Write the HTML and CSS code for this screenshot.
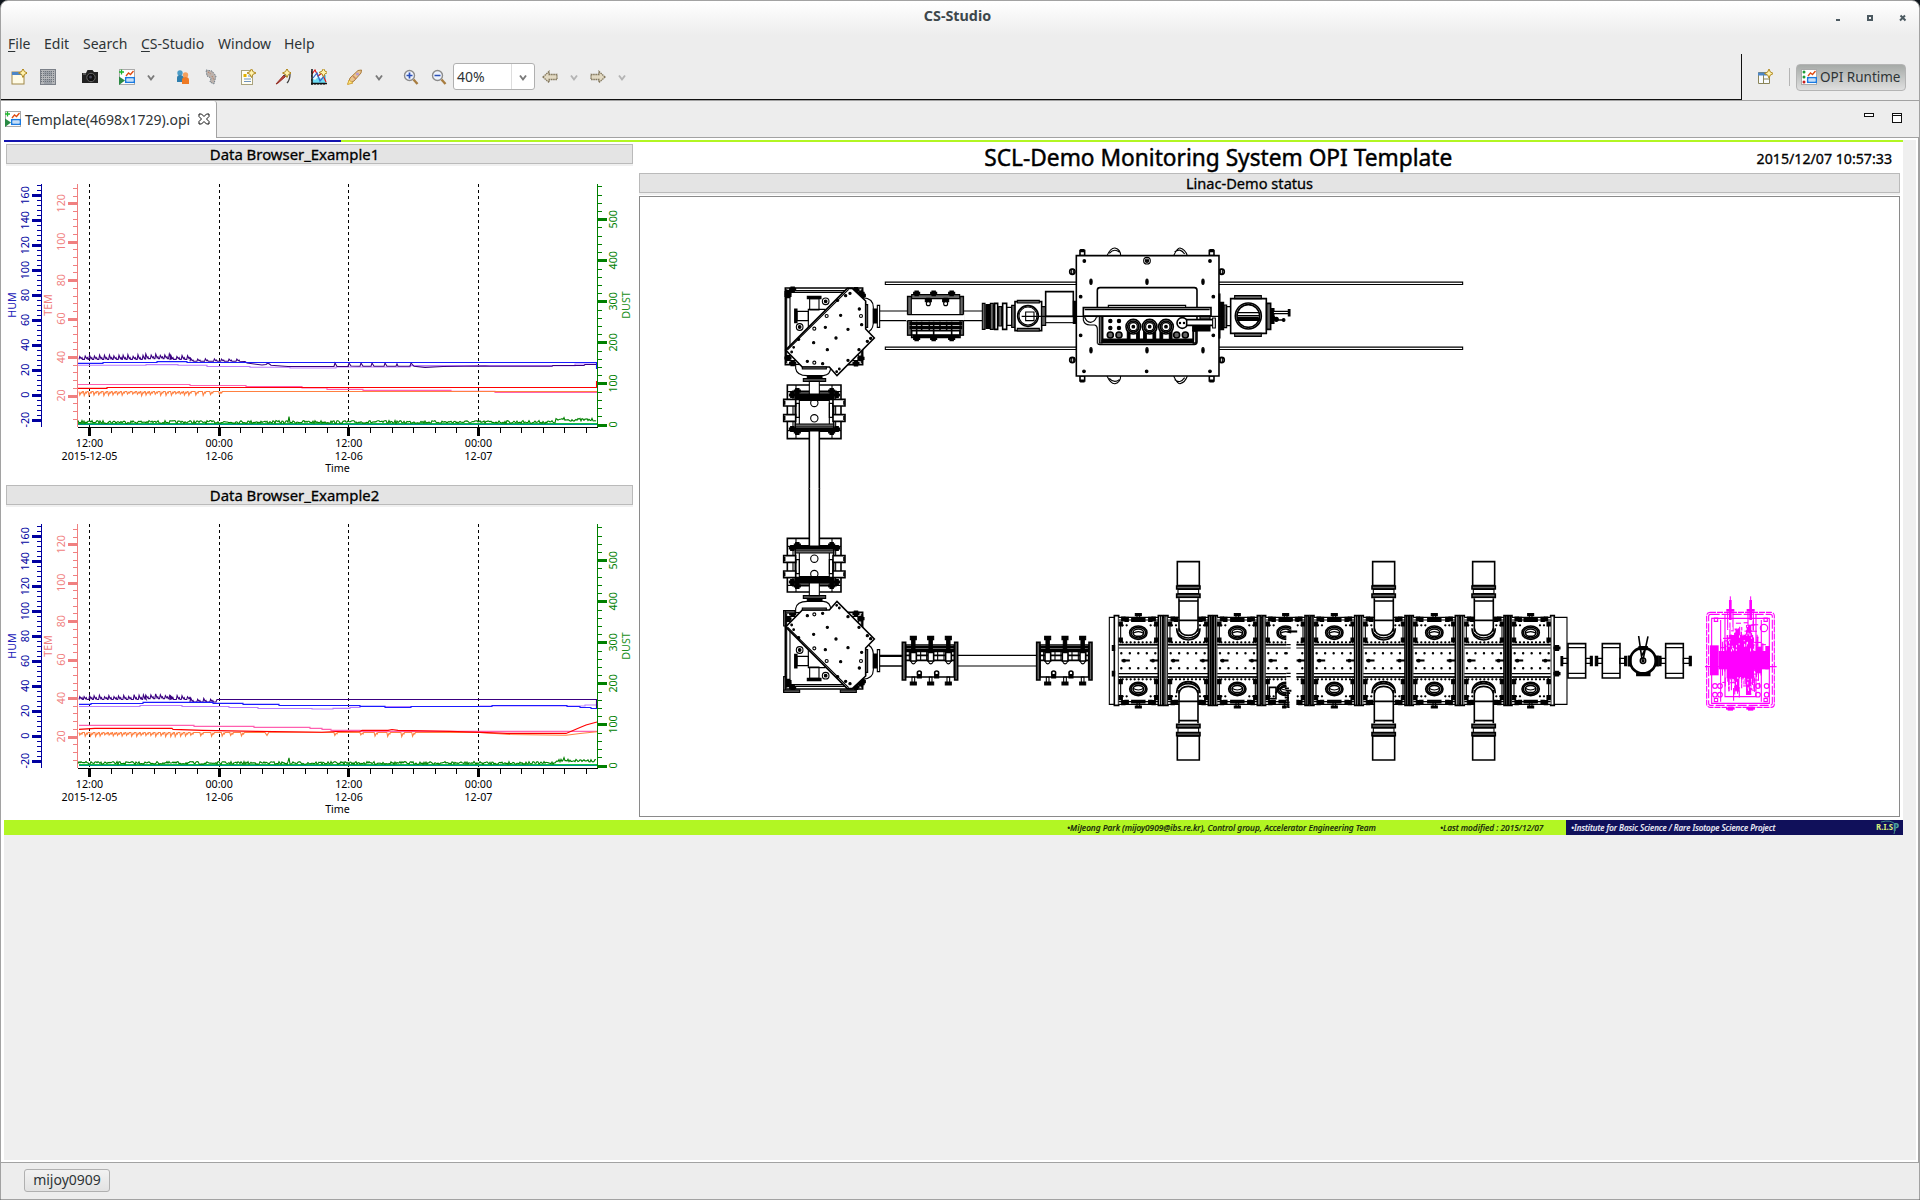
FILE: index.html
```
<!DOCTYPE html>
<html lang="en">
<head>
<meta charset="utf-8">
<title>CS-Studio</title>
<link rel="stylesheet" href="styles.css">
</head>
<body>
<svg class="defs" aria-hidden="true">
  <defs>
    <g id="star"><path d="M0-4.5 1.4-1.4 4.5 0 1.4 1.4 0 4.5-1.4 1.4-4.5 0-1.4-1.4Z" fill="#fff3b0" stroke="#b08820"/></g>
    <g id="opi">
      <rect x=".5" y=".5" width="15" height="15" fill="#fff" stroke="#aaa"/>
      <path d="M7 7 9.5 4l2 1.5L14.5 2" fill="none" stroke="#e04a10" stroke-width="1.3"/>
      <rect x="6.7" y="8.7" width="8.6" height="4.6" fill="#fff" stroke="#1a7ae0" stroke-width="1.5"/>
      <path d="M8.5 11h5" stroke="#1a7ae0" stroke-dasharray="1 1"/>
    </g>
    <g id="chev"><path d="M1 3.5 4 7.5 7 3.5" fill="none" stroke="currentColor" stroke-width="1.9"/></g>
    <g id="arrow"><path d="M1 8 7 2.5V5.5H15V10.5H7V13.5Z" fill="#e2d9c2" stroke="#857a60" stroke-width="1.3" stroke-dasharray="1.6 .6"/></g>
    <g id="lens"><circle cx="6.5" cy="6.5" r="5" fill="#eef3fc" stroke="#8c8c8c" stroke-width="1.4"/><path d="M10.5 10.5 14.5 15" stroke="#a87d40" stroke-width="2.4"/></g>
  </defs>
</svg>
<div class="window">
  <header class="titlebar">
    <span class="title">CS-Studio</span>
    <svg class="winbtns" width="70" height="12" fill="none" stroke="#4c5a61" stroke-width="2"><path d="M1 8h4"/><rect x="33" y="4" width="4" height="4"/><path d="M65.500 3.500l5 5M70 3.500l-5 5"/></svg>
  </header>
  <nav class="menu">
    <span class="m1"><u>F</u>ile</span><span class="m2">Edit</span><span class="m3">Se<u>a</u>rch</span><span class="m4"><u>C</u>S-Studio</span><span class="m5">Window</span><span class="m6">Help</span>
  </nav>
  <div class="toolbar">
    <div class="tools">
      <svg class="ic" viewBox="0 0 16 16"><rect x="1" y="3" width="12" height="12" fill="#fffbe6" stroke="#a08848"/><rect x="1" y="3" width="12" height="3" fill="#4d86c6"/><use href="#star" x="12" y="4"/></svg>
      <svg class="ic g13" viewBox="0 0 16 16"><rect x=".5" y=".5" width="15" height="15" fill="#b4b6b9" stroke="#7b8088"/><path d="M4 2h8v5H4zM4 10h8v5H4z" fill="#9a9fa6"/><path d="M1 2.500h14M1 4.500h14M1 6.500h14M1 8.500h14M1 10.500h14M1 12.500h14" stroke="#6d737a" stroke-dasharray="1 1"/></svg>
      <svg class="ic g26" viewBox="0 0 16 16"><path d="M0 4h4l1.500-3h5L12 3h4v11H0Z" fill="#222"/><circle cx="9" cy="8.500" r="4.200" fill="#111" stroke="#666"/><path d="M1 5h3" stroke="#888"/><circle cx="8.500" cy="8" r="1.500" fill="#445"/></svg>
      <svg class="ic g21" viewBox="0 0 16 16"><use href="#opi"/><path d="M0 3h5M2.500.5v5" stroke="#1db52b" stroke-width="1.300"/><path d="M0 7.500 6 11.500 0 16Z" fill="#2a8a44"/></svg>
      <svg class="ch g12" viewBox="0 0 8 12"><use href="#chev" y="1"/></svg>
      <svg class="ic g20" viewBox="0 0 16 16"><circle cx="5" cy="4" r="2.700" fill="#4a9bc6"/><path d="M2 13V9q0-3 3-3t4 3v4Z" fill="#2f7fae"/><circle cx="10.500" cy="6" r="2.700" fill="#f3a05e"/><path d="M7 15v-4q0-3 3.500-3t3.500 3v4Z" fill="#ee7a24"/></svg>
      <svg class="ic g12" viewBox="0 0 16 16"><path d="M3 1 9 2 13 7 11 15 7 13 8 9 4 7Z" fill="#bcb2ac" stroke="#6e7c88" stroke-dasharray="1.500 1"/><path d="M9 7l2 4M5 3l3 2" stroke="#b5765a" stroke-dasharray="1 1"/></svg>
      <svg class="ic g21" viewBox="0 0 16 16"><rect x="1.500" y="1.500" width="11" height="14" fill="#fffef4" stroke="#a9a27c"/><rect x="3.500" y="5" width="3" height="3" fill="#e2b100"/><path d="M8 7h3M4 10h7M4 12.500h7" stroke="#6f93bf"/><use href="#star" x="11.500" y="4"/></svg>
      <svg class="ic g19" viewBox="0 0 16 16"><path d="M1 15 9 6l1.500 1.500-8 7Z" fill="#c9463a" stroke="#8e2a20"/><path d="M9 7l4-4M15 5q0 6-3 9" stroke="#444" fill="none" stroke-width="1.300"/><use href="#star" x="12" y="4"/></svg>
      <svg class="ic g20" viewBox="0 0 16 16"><rect x="1" y="1" width="14" height="13" fill="#e9fbff"/><path d="M1 9l3 2 3-3 4 2 4-4v9H1z" fill="#6edcf4"/><path d="M1 5 4 1l3 6 4-3 4 9" stroke="#e01818" fill="none" stroke-width="1.200"/><path d="M2 9 6 4l3 8 5-6" stroke="#3465c8" fill="none" stroke-width="1.200"/><path d="M1 0v16M0 14.500h16" stroke="#111" stroke-width="1.500"/><path d="M4 14v2M7 14v2M10 14v2M13 14v2M0 3h1M0 7h1M0 11h1" stroke="#111"/><use href="#star" x="12.500" y="3.500"/></svg>
      <svg class="ic g20" viewBox="0 0 16 16"><path d="M1 15 3 9 11 1.500 14.500 1 14 4 7 12Z" fill="#eac48c" stroke="#a97b3c"/><path d="M.5 15.500 2 11l4 3Z" fill="#ffe67a" stroke="#d3a640"/><circle cx="10.500" cy="5" r="1.600" fill="#b79ad0"/><path d="M6 7l3 3" stroke="#c88860" stroke-width="1.500"/></svg>
      <svg class="ch g12" viewBox="0 0 8 12"><use href="#chev" y="1"/></svg>
      <svg class="ic g20" viewBox="0 0 16 16"><use href="#lens"/><path d="M3.500 6.500h6M6.500 3.500v6" stroke="#2a4fb8" stroke-width="1.700"/></svg>
      <svg class="ic g12" viewBox="0 0 16 16"><use href="#lens"/><path d="M3.500 6.500h6" stroke="#2a4fb8" stroke-width="1.700"/></svg>
      <div class="combo"><span>40%</span><i><svg class="ch" viewBox="0 0 8 12"><use href="#chev" y="1"/></svg></i></div>
      <svg class="ic g7" viewBox="0 0 16 16"><use href="#arrow"/></svg>
      <svg class="ch g12 dim" viewBox="0 0 8 12"><use href="#chev" y="1"/></svg>
      <svg class="ic g12" viewBox="0 0 16 16"><use href="#arrow" transform="translate(16 0) scale(-1 1)"/></svg>
      <svg class="ch g12 dim" viewBox="0 0 8 12"><use href="#chev" y="1"/></svg>
    </div>
    <div class="persp">
      <svg class="ic" viewBox="0 0 16 16"><path d="M1.500 3.500h11v11h-11zM6.500 6v8.500M6.500 10h6" fill="#f8fbff" stroke="#8a8558"/><path d="M1 3.500h9v3H1z" fill="#4d86c6"/><use href="#star" x="12" y="4.500"/></svg>
      <i class="vsep"></i>
      <div class="pbtn"><svg class="ic" viewBox="0 0 16 16"><use href="#opi"/><circle cx="3" cy="3" r="1.500" fill="#1e9c38"/><circle cx="3" cy="8" r="1.500" fill="#1e9c38"/><circle cx="3" cy="13" r="1.500" fill="#c81e1e"/></svg><span>OPI Runtime</span></div>
    </div>
  </div>
  <div class="tabs">
    <div class="tab"><svg class="ic" viewBox="0 0 16 16"><use href="#opi"/><path d="M0 3h5M2.500.5v5" stroke="#1db52b" stroke-width="1.300"/><path d="M0 7.500 6 11.500 0 16Z" fill="#2a8a44"/></svg><span>Template(4698x1729).opi</span>
      <svg class="x" width="12" height="12" viewBox="0 0 12 12"><path d="M1 1h2.500L6 3.500 8.500 1H11v2.500L8.500 6 11 8.500V11H8.500L6 8.500 3.500 11H1V8.500L3.500 6 1 3.500Z" fill="#fff" stroke="#111"/></svg>
    </div>
    <div class="tabfill"><svg width="40" height="12" fill="#fff" stroke="#111"><rect x=".5" y=".5" width="9" height="3"/><rect x="28.500" y=".5" width="9" height="9"/><path d="M28 2.500h10"/></svg></div>
  </div>
  <div class="editor">
    <main class="canvas">
      <div class="strip"><i></i></div>
      <div class="cols">
        <section class="left">
          <h2>Data Browser_Example1</h2>
          <svg class="chart" id="chart1" viewBox="4 164 630 321" width="630" height="321"></svg>
          <h2>Data Browser_Example2</h2>
          <svg class="chart" id="chart2" viewBox="4 505 630 315" width="630" height="315"></svg>
        </section>
        <section class="right">
          <div class="head"><h1>SCL-Demo Monitoring System OPI Template</h1><time>2015/12/07 10:57:33</time></div>
          <h2>Linac-Demo status</h2>
          <svg class="linac" id="linac" viewBox="640 197 1259 619" width="1259" height="619">
            <g id="cad" transform="scale(.33333)"></g>
          </svg>
        </section>
      </div>
      <footer class="foot"><span class="f1">•MiJeong Park (mijoy0909@ibs.re.kr), Control group, Accelerator Engineering Team</span><span class="f2">•Last modified : 2015/12/07</span>
        <div class="navy"><span>•Institute for Basic Science / Rare Isotope Science Project</span>
          <svg width="26" height="15"><text x="0" y="10" class="risp" textLength="17" lengthAdjust="spacingAndGlyphs">R.I.S</text><text x="17" y="11" class="rispp">P</text><path d="M5 2Q15-1 20 5L18 14" fill="none" stroke="#3f8a86"/></svg>
        </div>
      </footer>
    </main>
  </div>
  <div class="status"><span>mijoy0909</span></div>
</div>
<script src="app.js"></script>
</body>
</html>
```
FILE: styles.css
```
* { box-sizing: border-box; }
html, body { margin: 0; height: 100%; }
body { background: #10161c; font-family: "Noto Sans", "Open Sans", sans-serif; font-size: 14px; color: #2e3436; overflow: hidden; }
.defs { position: absolute; width: 0; height: 0; }
.window { width: 1920px; height: 1200px; display: flex; flex-direction: column; border: 1px solid #a2a2a2; border-radius: 8px 8px 0 0; background: linear-gradient(#fff, #ededed 34px); overflow: hidden; }
.titlebar { height: 31px; display: flex; align-items: center; justify-content: center; padding: 0 14px 2px 0; }
.title { flex: 1; text-align: center; padding-left: 79px; font-weight: 700; font-size: 14.300px; color: #3d474b; }
.winbtns { overflow: visible; margin-top: 4px; }
.menu { height: 22px; display: flex; align-items: center; padding-left: 7px; white-space: nowrap; }
.menu u { text-underline-offset: 2px; }
.m1 { width: 36px; } .m2 { width: 39px; } .m3 { width: 58px; } .m4 { width: 77px; } .m5 { width: 66px; }
.toolbar { height: 46px; display: flex; }
.tools { flex: none; width: 1741px; display: flex; align-items: center; padding-left: 10px; border: solid #111; border-width: 0 1px 1px 0; }
.ic { width: 16px; height: 16px; flex: none; }
.ch { width: 8px; height: 12px; flex: none; color: #7a7a7a; }
.dim { color: #b4b4b4; }
.g7 { margin-left: 7px; } .g12 { margin-left: 12px; } .g13 { margin-left: 13px; }
.g19 { margin-left: 19px; } .g20 { margin-left: 20px; } .g21 { margin-left: 21px; } .g26 { margin-left: 26px; }
.combo { width: 82px; height: 27px; margin-left: 6px; display: flex; align-items: center; background: #fff; border: 1px solid #b0b0b0; border-radius: 3px; }
.combo span { flex: 1; padding-left: 3px; }
.combo i { width: 23px; height: 100%; border-left: 1px solid #ddd; display: flex; align-items: center; justify-content: center; }
.persp { display: flex; align-items: center; padding-left: 15px; }
.vsep { width: 1px; height: 18px; background: #b5b5b5; margin: 0 6px 0 16px; }
.pbtn { width: 110px; height: 27px; display: flex; align-items: center; gap: 3px; padding-left: 4px; border: 1px solid #b4b4b4; border-radius: 4px; background: linear-gradient(#a6aaa7, #e0e0e0); white-space: nowrap; font-size: 13.500px; }
.tabs { height: 38px; display: flex; border-top: 1px solid #a2a2a2; background: #ededed; }
.tab { width: 216px; display: flex; align-items: center; background: #fff; border-right: 1px solid #a2a2a2; padding: 0 0 1px 4px; border-top-right-radius: 3px; white-space: nowrap; }
.tab span { margin: 0 8px 0 4px; flex: none; width: 165px; }
.tabfill { flex: 1; border-bottom: 1px solid #a2a2a2; display: flex; justify-content: flex-end; padding: 12px 15px 0 0; }
.editor { flex: 1; padding: 2px 2px 2px 3px; background: #fff; border-right: 1px solid #a2a2a2; border-bottom: 1px solid #a2a2a2; }
.canvas { height: 100%; background: linear-gradient(90deg, #efefef, #efefef); padding-right: 13px; }
.strip { height: 2px; background: #b2f623; }
.strip i { display: block; width: 337px; height: 2px; background: #1414ae; }
.cols { display: flex; height: 678px; background: #fff; }
h1, h2, time { margin: 0; color: #000; font-weight: 400; -webkit-text-stroke: .3px #000; white-space: nowrap; }
h2 { height: 20px; font-size: 14.900px; line-height: 18px; text-align: center; background: #e4e4e4; border: 1px solid #bababa; box-shadow: 0 2px #f0f0f0; overflow: hidden; }
.left { width: 629px; height: 678px; padding: 2px 0 0 2px; flex: none; }
.left h2 { padding-right: 50px; }
.chart { display: block; margin-left: -2px; }
.right { margin-left: 6px; width: 1261px; flex: none; display: flex; flex-direction: column; }
.head { height: 31px; display: flex; align-items: center; justify-content: flex-end; padding: 1px 8px 0 0; }
h1 { flex: 1; text-align: center; font-size: 22.700px; line-height: 28px; padding-left: 41px; -webkit-text-stroke-width: .45px; }
time { font-size: 14.200px; }
.right h2 { padding-right: 40px; font-size: 14.600px; }
.linac { display: block; box-sizing: content-box; margin-top: 3px; border: 1px solid #8a8a8a; background: #fff; }
.foot { height: 15px; display: flex; background: #b2f623; font-size: 8.300px; line-height: 16px; font-style: italic; font-weight: 500; color: #14240a; white-space: nowrap; -webkit-text-stroke: .15px; }
.f1 { margin-left: 1063px; width: 373px; }
.f2 { width: 126px; }
.navy { flex: 1; background: #10105a; color: #f2f2fa; display: flex; justify-content: space-between; padding: 0 1px 0 5px; font-size: 8px; }
.risp { font: 700 9px "Noto Sans"; fill: #d6ec7a; }
.rispp { font: 700 10px "Noto Sans"; fill: #4fa3a0; }
.status { height: 36px; display: flex; align-items: center; padding: 0 0 1px 23px; background: #ededed; }
.status span { width: 86px; height: 23px; line-height: 20px; text-align: center; border: 1px solid #b0b0b0; border-radius: 3px; background: linear-gradient(#f2f2f2, #e2e2e2); }
.chart text { font-family: "Noto Sans", sans-serif; font-size: 10.7px; text-anchor: middle; }
.chart .l { fill: none; stroke-width: 1.1; }
#cad * { vector-effect: non-scaling-stroke; }
#cad { stroke: #000; stroke-width: 1.1; fill: none; }
#cad .w { fill: #fff; } #cad .b { fill: #000; } #cad .t { stroke-width: 1.6; } #cad .h { fill: #666; }
#cad .m { stroke: #f0f; } #cad .mf { fill: #f0f; stroke: none; }
#cad .n { fill: #fff; stroke: none; }
```
FILE: app.js
```
let seed = 7;
const rnd = () => (seed = (seed * 16807) % 2147483647) / 2147483647;

/* ---- trend charts ---- */
function chart(id, dy, s, series) {
  let o = '';
  const box = (x, y, w, h, c) => { o += `<rect x="${x}" y="${y}" width="${w}" height="${h}" fill="${c}" shape-rendering="crispEdges"/>`; };
  const rot = (x, y, t, c) => { o += `<text transform="translate(${x + 4} ${y}) rotate(-90)" fill="${c}">${t}</text>`; };
  const top = 184 + dy, bot = 427 + dy + s;
  const axis = (x, c, zero, unit, v0, v1, step, lx, side) => {
    box(x, top, 1, bot - top, c);
    const m = unit / 5;
    for (let k = -5; k < 60; k++) {
      const y = zero - k * m;
      if (y < top || y > bot - 1) continue;
      const major = k % 5 === 0, len = major ? 9 : 4;
      box(side < 0 ? x - len : x + 1, Math.round(y) - (major ? 1 : 0), len, major ? 3 : 1, c);
      if (major) rot(lx, y, v0 + (k / 5) * step, c);
    }
  };
  axis(41, '#0000a0', 394.7 + dy + s, 24.92, 0, 160, 20, 25, -1);
  rot(12, 305 + dy + s, 'HUM', '#2020b8');
  axis(77, '#f08080', 395.5 + dy + s, 38.45, 20, 120, 20, 61, -1);
  rot(48, 305 + dy + s, 'TEM', '#f08080');
  for (let i = 0; i < 4; i++) {
    const x = Math.round(89 + i * 129.65);
    o += `<path d="M${x + .5} ${top}V${bot}" stroke="#000" stroke-dasharray="3 3"/>`;
  }
  series(o2 => { o += o2; });
  axis(597, '#008000', 424.5 + dy + s, 41.05, 0, 500, 100, 613, 1);
  rot(626, 305 + dy + s, 'DUST', '#209020');
  box(78, bot, 520, 1, '#000');
  for (let i = 0; i < 24; i++) {
    const x = Math.round(89 + i * 21.61), M = i % 6 === 0;
    if (x > 596) break;
    box(M ? x - 1 : x, bot, M ? 3 : 1, M ? 9 : 6, '#000');
  }
  [['12:00', '2015-12-05'], ['00:00', '12-06'], ['12:00', '12-06'], ['00:00', '12-07']].forEach((l, i) => {
    const x = 89.5 + i * 129.65;
    o += `<text x="${x}" y="${447 + dy + s}">${l[0]}</text><text x="${x}" y="${460 + dy + s}">${l[1]}</text>`;
  });
  o += `<text x="337.5" y="${472 + dy + s}">Time</text>`;
  document.getElementById(id).innerHTML = o;
}
const line = (pts, c, dy = 0) => `<path class="l" stroke="${c}" d="M${pts.map(p => p[0] + ' ' + (p[1] + dy)).join('L')}"/>`;
/* steps hold each value until the next point */
const stair = (pts, c) => {
  const r = [];
  pts.forEach((p, i) => { if (i) r.push([p[0], pts[i - 1][1]]); r.push(p); });
  return line(r, c);
};
function saw(x0, x1, y, amp, period) {
  const r = [];
  for (let x = x0; x < x1; x += period * (.85 + rnd() * .3)) {
    r.push([x, y], [x + .8, y + amp * (.7 + rnd() * .5)], [x + 2.2, y + amp * .2], [x + 3, y + amp * .45], [x + 3.6, y]);
  }
  return r;
}
function noise(y, end) {
  const r = [];
  for (let x = 78; x < 597; x += 1) r.push([x, (x > 555 ? end : y) + (rnd() - .5) * 2.9 - (x === 289 ? 4 : 0) - (x === 564 ? 2 : 0)]);
  return r;
}
chart('chart1', 0, 0, add => {
  add(stair([[78, 365.3], [146, 364.6], [178, 365.3], [207, 366.5], [250, 367.3], [290, 368], [336, 367], [410, 365.6], [575, 364], [597, 364]], '#b97cff'));
  add(line([...saw(79, 145, 359.4, -4, 4.8), ...saw(145, 170, 358.6, -4, 4.8), ...saw(170, 188, 359.4, -4, 5.5), ...saw(190, 240, 361.3, -2.500, 8), [245, 361.5], [247, 363], [262, 365], [266, 364.500], [268, 363], [271, 365.300], [288, 366.500],
    [334, 366.500], [335, 363], [337, 366.500], [348, 366.500], [349, 363], [351, 366], [360, 366.300], [361, 363], [363, 366.300], [371, 366.300], [372, 363], [374, 366.300], [384, 366.300], [385, 363], [387, 366.300], [396, 366.300], [397, 364], [398, 366.300], [410, 366.300], [411, 363], [414, 366.300], [425, 367.400], [443, 366.500], [485, 366], [490, 366.300], [552, 366.300], [553, 365.500], [584, 365.500], [585, 364.500], [597, 364.500]], '#3a0080'));
  add(stair([[78, 363.400], [103, 362.500], [157, 361.600], [187, 362.500], [597, 362.500]], '#1a1aff'));
  add(line([[596.500, 362], [596.500, 369]], '#1a1aff'));
  add(stair([[78, 384.500], [190, 385.500], [246, 386.500], [302, 388], [327, 389.400], [363, 390.400], [451, 391.400], [495, 392.400], [597, 392.400]], '#ff5fb0'));
  add(line([...saw(79, 190, 391.500, 3.500, 4.800), ...saw(195, 226, 391.500, 3.500, 8), [228, 391.500], [597, 391.500]], '#ff8040'));
  add(stair([[78, 388.400], [107, 387.500], [597, 387.500]], '#f00'));
  add(line([[596.500, 388], [596.500, 381]], '#f00'));
  add(line([[78, 424.500], [597, 424.500]], '#009090'));
  add(line([[78, 423.500], [597, 423.500]], '#10c040'));
  add(line(noise(422, 419.800), '#008000'));
});
chart('chart2', 340, 1, add => {
  add(stair([[79, 706.500], [140, 705.500], [182, 706.500], [229, 707.500], [258, 708.500], [312, 709], [333, 708.400], [350, 707.400], [360, 706.500], [480, 706], [585, 705], [597, 703]], '#b97cff'));
  add(line([...saw(79, 145, 699.500, -4, 4.800), ...saw(145, 170, 698.600, -4, 4.800), ...saw(170, 188, 699.500, -4, 5.5), ...saw(190, 214, 702, -3.500, 7), [216, 702], [217, 699.500], [596.500, 699.500], [596.500, 708]], '#3a0080'));
  add(stair([[79, 704.400], [91, 703.500], [143, 702.400], [213, 703.400], [243, 704.400], [279, 705.500], [360, 706.400], [385, 707.500], [411, 706.500], [492, 705.500], [567, 706.500], [580, 707.500], [591, 708.500], [597, 708.500]], '#1a1aff'));
  add(stair([[79, 725.400], [194, 726.400], [254, 727.400], [310, 728.400], [322, 729.400], [331, 730.400], [360, 731.400], [597, 731.400]], '#ff5fb0'));
  add(line([...saw(79, 188, 732.500, 3.500, 4.800), ...saw(190, 246, 732.500, 3.500, 10), [265, 732.500], [267, 735.500], [269, 732], ...saw(334, 345, 732.500, 3, 12), ...saw(360, 412, 732.500, 3.500, 12.500), [480, 732.500], [510, 734.500], [566, 735.300], [580, 733.500], [597, 731.800]], '#ff8040'));
  add(line([[79, 729.400], [95, 728.400], [172, 728.400], [173, 729.400], [203, 730.400], [257, 731.400], [322, 732.200], [336, 731.500], [360, 731.300], [362, 730.400], [388, 730.400], [392, 729.500], [398, 730.400], [450, 731.400], [480, 732.400], [507, 733.400], [566, 733.400], [573, 730.500], [580, 727.500], [586, 725], [597, 722]], '#f00'));
  add(line([[79, 765.500], [597, 765.500]], '#009090'));
  add(line([[79, 764.500], [597, 764.500]], '#10c040'));
  add(line(noise(763, 760.500), '#008000'));
});

/* ---- linac drawing; every group uses thirds of a pixel ---- */
const R = (x, y, w, h, c = '') => `<rect x="${x}" y="${y}" width="${w}" height="${h}" class="${c}"/>`;
const C = (x, y, r, c = '') => `<circle cx="${x}" cy="${y}" r="${r}" class="${c}"/>`;
const P = (d, c = '') => `<path d="${d}" class="${c}"/>`;
const G = (x, y, s) => `<g transform="translate(${x * 3} ${y * 3})">${s}</g>`;
const bolt = (x, y) => R(x - 5, y - 7, 10, 14, 'b') + R(x - 9, y - 3, 18, 6, 'b');
const dots = (a, r, c) => a.map(p => C(p[0], p[1], r, c)).join('');
const bolts = a => a.map(p => bolt(p[0], p[1])).join('');

/* bending magnet with the steerer below it */
const corner =
  R(76, 174, 232, 230, 'w t') + R(90, 187, 205, 205) + P('M80 178V400M304 178V400M94 182H290') +
  R(104, 237, 7, 41, 'b') + R(111, 244, 34, 28) + R(142, 199, 41, 7, 'b') + R(149, 206, 28, 34) + R(145, 238, 50, 60) +
  P('M107 405V415Q110 437 142 437H190Q212 435 212 412', 'w') + P('M308 203Q340 205 340 232V280Q338 305 318 307', 'w') +
  bolts([[84, 188], [98, 178], [84, 196], [288, 180], [303, 190], [307, 196], [84, 384], [98, 400], [288, 401], [303, 385]]) +
  P('M262 175H277L317 213V297L343 324L231 437L208 411H127L77 360Z', 'w t') + P('M266 178L82 360') +
  R(127, 411, 72, 6, 'h') + R(317, 224, 6, 68, 'h') +
  dots([[197, 214], [119, 291]], 10) + dots([[197, 214], [119, 291]], 4, 'b') +
  dots([[233, 211], [257, 197], [270, 190], [298, 237], [242, 256], [305, 284], [196, 292], [264, 298], [228, 324], [161, 338], [116, 328], [332, 325], [322, 334], [202, 359], [297, 359], [142, 394], [188, 401], [264, 391]], 3.4, 'b') +
  dots([[101, 352], [95, 366], [230, 425], [238, 417]], 2.500, 'b') +
  dots([[200, 258], [303, 258], [163, 296], [163, 398]], 4.500) +
  R(340, 237, 12, 42, 'b') + R(352, 226, 7, 66, 'w') + P('M359 243H442M359 272H442') +
  R(142, 437, 44, 9, 'b') + R(130, 446, 67, 8, 'h') +
  R(82, 465, 161, 161, 'w t') + P('M82 485H243M82 602H243M108 465V490M216 465V490M108 602V626M216 602V626') +
  R(99, 488, 128, 116) + R(106, 494, 115, 104, 't') + R(118, 511, 90, 74) +
  R(98, 484, 130, 9, 'h t') + R(106, 497, 115, 12, 'b') + R(106, 582, 115, 9, 'h') + R(98, 594, 130, 7, 'b') +
  R(71, 508, 36, 20, 'w t') + R(71, 554, 36, 20, 'w t') + R(219, 508, 36, 20, 'w t') + R(219, 554, 36, 20, 'w t') +
  R(108, 520, 10, 42) + R(208, 520, 10, 42) +
  dots([[163, 519], [163, 565]], 11) + bolts([[112, 483], [215, 483], [97, 495], [230, 495], [112, 606], [215, 606], [97, 597], [230, 597]]) +
  P('M74 512V524M252 512V524M74 558V570M252 558V570', 't') +
  R(148, 454, 30, 38, 'w') + R(148, 602, 30, 175, 'n') + P('M148 776V602H178V776', 't');

const quad = R(443, 200, 167, 115, 'w t') + R(443, 200, 11, 115, 'h') + R(600, 200, 10, 115, 'h') + R(455, 194, 144, 12, 'h') +
  R(450, 277, 155, 7, 'b') + R(450, 290, 155, 6, 'b') + R(455, 302, 145, 20, 't') + R(460, 316, 136, 5, 'b') +
  P('M470 275V320M521 275V320M575 275V320M485 275V300M508 275V300M540 275V300M560 275V300', 't') +
  bolts([[470, 190], [521, 190], [575, 190], [470, 325], [521, 325], [575, 325], [505, 212], [557, 212]]) +
  dots([[505, 221], [557, 221]], 6, 'w') + R(438, 254, 176, 18, 'n') + P('M442 254H610M442 272H610');

let bellows = P('M610 243H667M610 272H667') + R(667, 220, 8, 78, 'h');
[680, 685, 690, 697, 703].forEach(x => { bellows += P(`M${x} 224V295`, 't'); });
bellows += R(678, 224, 12, 71, 'b') + R(691, 220, 9, 78, 'h') + R(704, 220, 9, 78, 'w t') + R(716, 230, 9, 58, 'h') + R(728, 220, 12, 78, 'w t') + R(740, 232, 15, 54) +
  R(755, 226, 12, 66, 'h') + R(765, 215, 80, 87, 'w t') + R(772, 211, 66, 8, 'h') + R(772, 295, 66, 8, 'h') +
  C(804, 258, 31, 't') + C(804, 258, 27) + R(797, 246, 25, 26) + R(845, 230, 12, 56, 'h') + R(857, 185, 83, 74, 'w t') +
  P('M857 278H945') + R(940, 214, 9, 66, 'b');

/* target chamber */
const mirrorY = (s, sum) => `<g transform="translate(0 ${sum}) scale(1 -1)">${s}</g>`;
const wheels = P('M201 77Q212 53 225 54Q242 58 242 77M208 70Q222 54 238 66M401 77Q412 53 420 54Q436 58 442 77M404 66Q420 52 434 72') +
  [127, 515].map(x => R(x - 7, 62, 14, 15, 't') + R(x - 5, 59, 10, 6, 'b')).join('') +
  [97, 545].map(x => C(x, 125, 8, 't') + R(x - 3, 118, 6, 14)).join('');
let chamber = P('M109 156.500H-464V163.500H109M109 351.500H-464V358.500H109M537 156.500H1268V163.500H537M537 351.500H1268V358.500H537') +
  wheels + mirrorY(wheels, 515) + R(109, 77, 428, 361, 'w t') +
  dots([[133, 93], [510, 93], [122, 200], [520, 200], [122, 316], [520, 316], [132, 424], [320, 424], [510, 424]], 4, 'b') +
  [[153, 155], [321, 155], [489, 155], [153, 361], [321, 361], [489, 361]].map(p => `<ellipse cx="${p[0]}" cy="${p[1]}" rx="3.500" ry="8" class="b"/>`).join('') +
  C(321, 92, 10) + C(321, 92, 5) + C(321, 92, 2, 'b') +
  '<rect x="172" y="173" width="299" height="170" rx="8" class="t"/>' +
  R(205, 226, 232, 7) + R(168, 262, 292, 78, 'n') + P('M130 258V270Q134 285 150 285H164Q172 287 172 297V340M133 258Q138 277 152 277Q167 275 170 258') +
  R(178, 259, 8, 80, 'h') + P('M188 259V328H460V300', 't') + R(186, 331, 274, 7, 'b') +
  R(130, 233, 383, 25, 'w t') + P('M134 239H509') +
  dots([[211, 273], [237, 273], [211, 294], [237, 294]], 5, 'b') + dots([[211, 315], [237, 315], [410, 315], [436, 315]], 9, 'h t');
[280, 329, 378].forEach(x => {
  chamber += R(x - 18, 303, 36, 30, 'b') + R(x - 10, 306, 20, 22, 'w') + C(x, 290, 22, 'w t') + C(x, 290, 17, 'h t') + C(x, 290, 12, 'w') + C(x, 290, 4, 'b');
});
chamber += C(427, 279, 16, 'w t') + dots([[420, 279], [432, 279]], 2, 'b') + R(440, 269, 84, 17, 'w t') + R(518, 264, 8, 30, 'w') +
  R(458, 289, 52, 14, 'b') + R(460, 303, 8, 36, 't') + R(480, 258, 30, 9, 'h') + P('M-55 259H556') +
  R(537, 192, 3, 132, 'b') + R(541, 217, 10, 82, 'b') + R(552, 225, 8, 68, 'h') + R(560, 230, 12, 57) + R(572, 206, 107, 104, 'w t') +
  R(584, 197, 80, 9, 'h') + R(584, 310, 80, 9, 'h') + C(625, 258, 39, 't') + C(625, 258, 34, 't') + P('M592 248H658M592 257H658M594 262H656', '') + R(592, 265, 66, 6, 'b') +
  R(680, 220, 12, 78, 'h t') + R(692, 236, 10, 44, 'b') + R(700, 244, 46, 7, 'w') + R(745, 239, 5, 19, 'b') + P('M700 258L712 270H728', 't') + C(731, 270, 4, 'b') + C(709, 268, 6, 'b');

/* beamline magnet on the lower line */
const lower = R(427, 367, 166, 113, 'n') + R(427, 367, 10, 113, 'h t') + R(584, 367, 9, 113, 'h t') + R(437, 375, 146, 96, 't') +
  R(437, 380, 146, 4, 'b') + R(437, 388, 146, 7, 'b') + P('M437 406H583M437 421H583', 't') +
  P('M448 395V421M468 395V421M482 395V421M500 395V421M520 395V421M533 395V421M552 395V421M574 395V421') +
  [460, 512, 565].map(x => R(x - 9, 349, 18, 10, 'b') + R(x - 5, 358, 10, 34, 'b') + R(x - 8, 397, 17, 26, 'w t') + P(`M${x - 8} 423Q${x} 440 ${x + 9} 423`) + R(x - 4, 471, 8, 18) + R(x - 9, 486, 18, 9, 'b')).join('') +
  [478, 530].map(x => C(x, 459, 6, 't') + R(x - 6, 464, 12, 10, 'b')).join('');
const feet = R(71, 272, 34, 7, 'h') + R(71, 272, 6, 46, 'h') + R(71, 470, 6, 46, 'h') + R(71, 510, 48, 7, 'h') + R(241, 510, 48, 7, 'h');
const beam = feet + P('M359 406H427M359 438H427M593 406H829M593 438H829') + lower + `<g transform="translate(403 0)">${lower}</g>`;

/* cryomodule string */
const cells = [[86, 205, 145, 0], [234, 355, 295, 1], [382, 502, 442, 0], [527, 645, 587, 0], [672, 794, 733, 0], [820, 945, 881, 1], [970, 1096, 1033, 0], [1123, 1242, 1181, 1], [1266, 1382, 1322, 0]];
let tank = R(58, 202, 16, 261, 'w') + R(73, 197, 13, 269, 'w t') + R(1382, 197, 11, 269, 'w t') + R(1393, 202, 38, 261, 'w') +
  bolts([[1401, 294], [1401, 371]]) + R(67, 287, 7, 14, 'b') + R(67, 364, 7, 14, 'b');
cells.forEach(([a, b, c, pipe], i) => {
  let half = P(`M${a} 202H${b}M${a} 210H${b}M${a} 284H${b}M${a} 294H${b}`, '') + P(`M${a} 284H${b}`, 't') + P(`M${a + 6} 215V280M${b - 6} 215V280`);
  half += [[a + 6, 222], [b - 6, 222], [a + 6, 270], [b - 6, 270], [a + 14, 207], [b - 14, 207], [a + 24, 208], [b - 24, 208]].map(p => R(p[0] - 5, p[1] - 6, 10, 12, 'b')).join('');
  for (let x = a + 12; x < b - 6; x += 12) half += C(x, 277, 1.800, 'b') + (Math.abs(x - c) > 26 ? C(x, 226, 1.800, 'b') : '');
  if (!pipe) half += R(c - 20, 206, 40, 8, 'b') + R(c - 9, 191, 18, 6, 'b') + R(c - 4, 195, 8, 12) +
    `<ellipse cx="${c}" cy="248" rx="26" ry="20" class="w t"/><ellipse cx="${c}" cy="248" rx="22" ry="16" class="t"/><ellipse cx="${c}" cy="248" rx="16" ry="11" class="t"/>` + P(`M${c - 16} 250Q${c} 240 ${c + 16} 250`);
  else half += R(c - 33, 35, 66, 72, 'w t') + R(c - 35, 108, 70, 9, 'h t') + R(c - 31, 118, 62, 13, 'w') + R(c - 35, 132, 70, 10, 'h t') + R(c - 28, 145, 57, 100, 'n') +
    P(`M${c - 28} 145V245M${c + 29} 145V245M${c - 28} 153H${c + 29}M${c - 28} 211H${c + 29}`, 't') +
    P(`M${c - 35} 235Q${c - 34} 268 ${c} 270Q${c + 34} 268 ${c + 35} 235`, 't') + P(`M${c - 28} 235Q${c - 24} 256 ${c} 256Q${c + 24} 256 ${c + 29} 235M${c - 33} 247Q${c - 20} 264 ${c} 264Q${c + 20} 264 ${c + 33} 247`, 't');
  tank += R(a, 202, b - a, 261, 'n') + half + mirrorY(half, 665);
  for (let x = a + 8; x < b; x += 25.5) tank += C(x, 310, 2, 'b') + C(x, 355, 2, 'b');
  tank += R(a + 10, 330, 22, 3, 'b') + C(a + 16, 332, 4, 'b') + R(b - 24, 330, 22, 3, 'b') + C(b - 16, 332, 4, 'b');
  if (i < 8) {
    const n = cells[i + 1][0], w = (n - b) / 2 - 2;
    tank += R(b, 197, w, 269, 'w t') + R(n - w, 197, w, 269, 'w t') + P(`M${b + w / 2} 197V466M${n - w / 2} 197V466`, i % 2 ? 't' : '') + R(b + w, 203, 4, 258, i % 2 ? 'b' : 'h');
  }
});
/* unrendered sliver of the fourth cell */
tank += R(604, 215, 15, 260, 'n') + R(589, 250, 18, 230, 'n') + R(594, 243, 26, 3, 'b') + R(538, 412, 20, 34, 't') + P('M557 430Q566 410 590 410', 't');
for (let y = 415; y < 475; y += 7) tank += P(`M${584 + rnd() * 5} ${y}h${7 + rnd() * 8}v3`, 't');
tank += P('M594 420V472', 't') + C(590, 310, 2, 'b') + C(590, 355, 2, 'b') + P('M589 284H602M589 294H602M589 370H602M589 380H602');

const box = x => R(x, 281, 53, 103, 'w t') + P(`M${x} 293H${x + 53}M${x} 370H${x + 53}`);
const tail = R(543, 320, 5, 27, 'b') + R(548, 325, 16, 15) + box(564) + R(617, 325, 16, 15) + R(631, 319, 6, 28, 'b') + R(646, 319, 7, 28, 'b') + R(653, 325, 14, 15) + box(667) +
  R(719, 325, 15, 15) + R(734, 319, 6, 28, 'b') + R(745, 318, 8, 30, 'b') + C(789, 332, 37, 't') + C(789, 332, 40, 't') + C(789, 332, 8, 't') + C(789, 332, 3, 'b') +
  R(777, 290, 25, 9, 'b') + R(770, 368, 40, 9, 'b') + P('M786 328L776 258M790 325L804 259M784 320L794 300', 't') +
  R(826, 318, 9, 30, 'b') + R(838, 319, 5, 28, 'b') + R(843, 325, 14, 15) + box(857) + R(910, 325, 18, 15) + R(928, 319, 6, 28, 'b');

/* ion source, drawn as dense outlines */
let src = '<g class="m"><rect x="980" y="187" width="203" height="285" rx="10" stroke-dasharray="6 1"/><rect x="986" y="193" width="191" height="273" rx="6" stroke-dasharray="9 2"/>' +
  P('M995 205H1168V460H995ZM1022 210V455M1144 210V455M1035 195V440H1128V195M975 350H1190', '');
[1051, 1112].forEach(x => {
  src += R(x - 4, 150, 8, 60, 'mf') + R(x - 1.500, 139, 3, 14, 'mf') + R(x - 12, 177, 24, 8, 'mf') + P(`M${x - 8} 185V240M${x + 8} 185V240`) + R(x - 8, 470, 16, 12, 'mf') + R(x - 13, 474, 26, 5, 'mf');
});
src += R(990, 286, 26, 90, 'mf') + R(1016, 303, 150, 55, 'mf') + R(1040, 255, 82, 130, 'mf') + R(1064, 235, 14, 190, 'mf') + R(1098, 225, 16, 210, 'mf') + R(1128, 290, 18, 80, 'mf') + R(1156, 288, 14, 70, 'mf');
for (let i = 0; i < 300; i++) {
  const x = 1081 + (rnd() + rnd() - 1) * 68, y = 320 + (rnd() + rnd() - 1) * 112;
  src += i % 3 ? P(`M${x} ${y}v${10 + rnd() * 34}`) : P(`M${x} ${y}h${5 + rnd() * 18}`);
}
for (const x of [1005, 1020, 1134, 1160]) for (const y of [408, 434]) src += C(x, y, 7);
src += C(1152, 234, 11) + R(1003, 204, 10, 10) + R(1152, 204, 10, 10) + R(1003, 445, 10, 10) + R(1152, 445, 10, 10) + '</g>';
let gaps = '';
for (let i = 0; i < 40; i++) gaps += R(1042 + rnd() * 80, 225 + rnd() * 75, 2.500, 3 + rnd() * 6, 'n') + (i % 2 ? R(1042 + rnd() * 80, 375 + rnd() * 50, 2.500, 3 + rnd() * 6, 'n') : '');

document.getElementById('cad').innerHTML =
  G(760, 230, corner + mirrorY(corner, 1551) + quad + bellows) + G(1040, 230, chamber) + G(760, 520, beam) + G(1090, 550, tank) + G(1380, 550, tail + src + gaps);
```
